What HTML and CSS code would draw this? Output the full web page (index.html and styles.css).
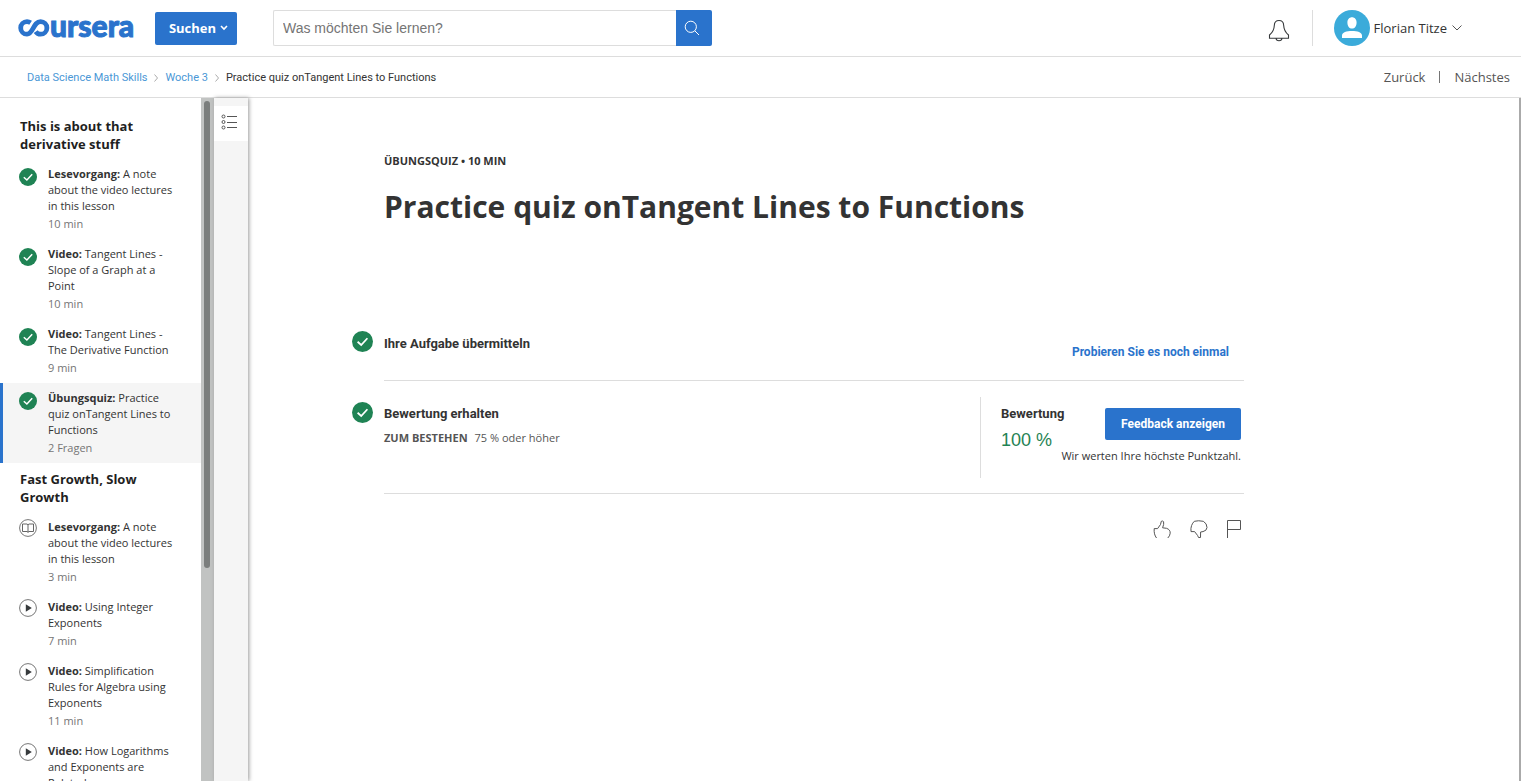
FILE: index.html
```html
<!DOCTYPE html>
<html lang="de">
<head>
<meta charset="utf-8">
<title>Practice quiz onTangent Lines to Functions | Coursera</title>
<link rel="stylesheet" href="styles.css">
</head>
<body>
<svg class="defs" aria-hidden="true">
  <symbol id="check" viewBox="0 0 18 18"><circle cx="9" cy="9" r="9" fill="#1f8354"/><path d="M4.8 9.2 7.9 12 13.2 6.2" fill="none" stroke="#fff" stroke-width="1.5"/></symbol>
  <symbol id="play" viewBox="0 0 18 18"><circle cx="9" cy="9" r="8.4" fill="#fff" stroke="#757575"/><path d="M6.8 5.3v7.4L12.8 9z" fill="#373a3c"/></symbol>
  <symbol id="book" viewBox="0 0 18 18"><circle cx="9" cy="9" r="8.4" fill="#fff" stroke="#757575"/><path d="M3.5 5H8L9 5.8 10 5h4.5v7.5H10L9 13.3 8 12.5H3.5zM9 5.800v7.5" fill="none" stroke="#555" stroke-width=".9"/></symbol>
</svg>
<header class="topbar">
  <a class="logo" href="#" aria-label="coursera">
    <svg class="logo-mark" width="32" height="18" viewBox="0 0 32 18" aria-hidden="true"><path d="M12.600 3.700C11.400 2.900 10.200 2.600 9 2.600a6.200 6.200 0 0 0 0 12.600c6.400 0 6.200-12.600 13.600-12.600a6.300 6.300 0 0 1 0 12.600c-2.400 0-3.900-1.100-4.900-2.600" fill="none" stroke="#2a73cc" stroke-width="4.800"/></svg>
    <span class="logo-text">ursera</span>
  </a>
  <button class="explore" type="button">Suchen
    <svg width="8" height="6" viewBox="0 0 8 6" aria-hidden="true"><path d="M1 1l3 3 3-3" fill="none" stroke="#fff" stroke-width="1.600"/></svg>
  </button>
  <form class="search">
    <input type="text" placeholder="Was möchten Sie lernen?" aria-label="Was möchten Sie lernen?">
    <button type="button" aria-label="Suche">
      <svg width="16" height="16" viewBox="0 0 16 16" fill="none" stroke="#fff" aria-hidden="true"><circle cx="6.800" cy="6.800" r="5.600"/><path d="M10.800 10.800 15 15"/></svg>
    </button>
  </form>
  <div class="account">
    <button class="bell" type="button" aria-label="Mitteilungen">
      <svg width="22" height="24" viewBox="0 0 22 24" fill="none" stroke="#373a3c" stroke-width="1.100" aria-hidden="true"><path d="M11 2.500C7.500 2.500 6.400 4.700 6.300 7.500 6.100 12.500 4.500 14.500 1.500 17v3.200h19V17c-3-2.500-4.600-4.500-4.800-9.500-.1-2.800-1.200-5-4.700-5zM8 20.200c.1 1.500 1.300 2.500 3 2.500s2.900-1 3-2.500"/></svg>
    </button>
    <button class="user" type="button">
      <svg width="36" height="36" viewBox="0 0 36 36" aria-hidden="true"><circle cx="18" cy="18" r="18" fill="#3babda"/><path d="M18 7.200c-2.700 0-4.600 2.100-4.600 5.200 0 3.500 2 6.200 4.600 6.200s4.600-2.700 4.600-6.200c0-3.100-1.900-5.200-4.600-5.200zM8 28v-2.500c0-3.200 4.600-4.500 10-4.500s10 1.300 10 4.500V28z" fill="#fff"/></svg>
      <span>Florian Titze</span>
      <svg width="10" height="6" viewBox="0 0 10 6" aria-hidden="true"><path d="M.5.500 5 5 9.500.500" fill="none" stroke="#555"/></svg>
    </button>
  </div>
</header>
<div class="subbar">
  <nav class="crumbs" aria-label="Pfad">
    <a href="#">Data Science Math Skills</a>
    <svg width="4" height="8" viewBox="0 0 4 8" aria-hidden="true"><path d="M.5.500 3.500 4 .5 7.500" fill="none" stroke="#aaa"/></svg>
    <a href="#">Woche 3</a>
    <svg width="4" height="8" viewBox="0 0 4 8" aria-hidden="true"><path d="M.5.500 3.500 4 .5 7.500" fill="none" stroke="#aaa"/></svg>
    <span>Practice quiz onTangent Lines to Functions</span>
  </nav>
  <nav class="pager" aria-label="Navigation"><a href="#">Zurück</a><i></i><a href="#">Nächstes</a></nav>
</div>
<div class="workspace">
  <aside class="lessons">
    <h2>This is about that derivative stuff</h2>
    <ul>
      <li><a href="#"><svg><use href="#check"/></svg><span><b>Lesevorgang:</b> A note about the video lectures in this lesson<small>10 min</small></span></a></li>
      <li><a href="#"><svg><use href="#check"/></svg><span><b>Video:</b> Tangent Lines - Slope of a Graph at a Point<small>10 min</small></span></a></li>
      <li><a href="#"><svg><use href="#check"/></svg><span><b>Video:</b> Tangent Lines - The Derivative Function<small>9 min</small></span></a></li>
      <li><a class="active" href="#"><svg><use href="#check"/></svg><span><b>Übungsquiz:</b> Practice quiz onTangent Lines to Functions<small>2 Fragen</small></span></a></li>
    </ul>
    <h2>Fast Growth, Slow Growth</h2>
    <ul class="open">
      <li><a href="#"><svg><use href="#book"/></svg><span><b>Lesevorgang:</b> A note about the video lectures in this lesson<small>3 min</small></span></a></li>
      <li><a href="#"><svg><use href="#play"/></svg><span><b>Video:</b> Using Integer Exponents<small>7 min</small></span></a></li>
      <li><a href="#"><svg><use href="#play"/></svg><span><b>Video:</b> Simplification Rules for Algebra using Exponents<small>11 min</small></span></a></li>
      <li><a href="#"><svg><use href="#play"/></svg><span><b>Video:</b> How Logarithms and Exponents are Related</span></a></li>
    </ul>
  </aside>
  <div class="scrolltrack"><div class="scrollthumb"></div></div>
  <div class="rail">
    <button type="button" aria-label="Lektionen">
      <svg width="16" height="16" viewBox="0 0 16 16" fill="none" stroke="#555" aria-hidden="true"><circle cx="2.500" cy="2.500" r="1.500"/><circle cx="2.500" cy="8" r="1.500"/><circle cx="2.500" cy="13.500" r="1.500"/><path d="M6 2.500h10M6 8.500h10M6 13.500h10"/></svg>
    </button>
  </div>
  <main>
    <div class="content">
      <p class="kind">ÜBUNGSQUIZ • 10 MIN</p>
      <h1>Practice quiz onTangent Lines to Functions</h1>
      <section class="step submit">
        <svg class="state"><use href="#check"/></svg>
        <h3>Ihre Aufgabe übermitteln</h3>
        <button class="retry" type="button">Probieren Sie es noch einmal</button>
      </section>
      <section class="step grade">
        <svg class="state"><use href="#check"/></svg>
        <div class="criteria">
          <h3>Bewertung erhalten</h3>
          <p><b>ZUM BESTEHEN</b>75 % oder höher</p>
        </div>
        <div class="result">
          <div class="score"><h3>Bewertung</h3><strong>100 %</strong></div>
          <button class="feedback" type="button">Feedback anzeigen</button>
          <p>Wir werten Ihre höchste Punktzahl.</p>
        </div>
      </section>
      <div class="reactions">
        <button type="button" aria-label="Gefällt mir"><svg width="18" height="18" viewBox="0 0 18 18"><path d="M3.500 18C1.600 15.500.9 12.500 1.200 8.600H4.600L7.500 4.500 8.300 1.300Q9.500.500 10.600 1.700 11.200 4 9.600 7.800L13.500 8.300Q17.400 9.600 17.200 13.200 16.900 16 14.800 18"/></svg></button>
        <button type="button" aria-label="Gefällt mir nicht"><svg width="18" height="18" viewBox="0 0 18 18"><path d="M1 11.600C.4 7 2 3.500 4.300 1.300Q8.500.200 13.300 1.300 17 3.300 17 7.500 16.800 10.800 13 11.600L10.600 12 10.500 17.500H8.500L7.600 15.500 4.600 11.600z"/></svg></button>
        <button type="button" aria-label="Melden"><svg width="14" height="18" viewBox="0 0 14 18"><path d="M.5 18V.500h13v9H.5"/></svg></button>
      </div>
    </div>
  </main>
</div>
</body>
</html>
```
FILE: styles.css
```css
* { box-sizing: border-box; }
body { margin: 0; height: 100vh; display: flex; flex-direction: column; overflow: hidden; background: #fff; color: #333; font-family: "Open Sans", sans-serif; }
a { color: inherit; text-decoration: none; }
button { border: 0; padding: 0; background: none; color: inherit; font-family: inherit; cursor: pointer; }
h1, h2, h3, p, ul { margin: 0; padding: 0; }
ul { list-style: none; }
.defs { position: absolute; width: 0; height: 0; }

.topbar { flex: none; height: 57px; display: flex; align-items: center; padding: 0 59px 0 18px; border-bottom: 1px solid #ddd; }
.logo { display: flex; align-items: center; width: 137px; color: #2a73cc; }
.logo-mark { flex: none; }
.logo-text { font: 900 30px/18px Lato, sans-serif; height: 24px; -webkit-text-stroke: 1px #2a73cc; }
.explore { display: flex; align-items: center; justify-content: center; gap: 4px; width: 82px; height: 33px; padding-left: 5px; border-radius: 2px; background: #2a73cc; color: #fff; font-size: 13px; line-height: 18px; font-weight: 700; }
.search { display: flex; width: 439px; height: 36px; margin-left: 36px; }
.search input { flex: 1; min-width: 0; border: 1px solid #ddd; border-right: 0; border-radius: 2px 0 0 2px; padding: 0 9px; font: 14px "Liberation Sans", sans-serif; color: #333; }
.search input::placeholder { color: #757575; }
.search button { display: flex; align-items: center; justify-content: center; width: 36px; padding-right: 4px; background: #2a73cc; border-radius: 0 2px 2px 0; }
.account { margin-left: auto; display: flex; align-items: center; height: 36px; }
.bell { display: flex; padding: 4px 22px 0 0; }
.user { display: flex; align-items: center; height: 36px; padding-left: 21px; border-left: 1px solid #ddd; font-size: 13px; }
.user span { margin: 0 5px 0 4px; }

.subbar { flex: none; height: 41px; display: flex; align-items: center; justify-content: space-between; padding: 0 11px 0 27px; border-bottom: 1px solid #ddd; }
.crumbs { display: flex; align-items: center; gap: 7px; padding-top: 1px; font: 11px Roboto, sans-serif; }
.crumbs a { color: #4a97d6; }
.pager { display: flex; align-items: center; gap: 14px; font-size: 13px; color: #555; }
.pager i { width: 1px; height: 12px; background: #757575; }

.workspace { flex: 1; min-height: 0; display: flex; }
.lessons { flex: none; width: 201px; padding-top: 19px; overflow: hidden; }
.lessons h2 { margin: 0 50px 6px 20px; font-size: 13px; line-height: 18px; color: #1f1f1f; }
.lessons ul + h2 { margin-top: 7px; }
.lessons li a { display: flex; gap: 11px; padding: 7px 28px 7px 16px; border-left: 3px solid transparent; font-size: 11px; line-height: 16px; }
.lessons li a.active { border-color: #2a73cc; background: #f5f5f5; }
.lessons li svg { flex: none; width: 18px; height: 18px; margin-top: 2px; }
.lessons .open svg { margin-top: 0; }
.lessons small { display: block; font-size: 11px; line-height: 18px; padding-top: 1px; margin-bottom: -1px; color: #757575; }
.scrolltrack { flex: none; width: 13px; padding: 3px; background: #c1c3c2; }
.scrollthumb { width: 6px; height: 69%; border-radius: 3px; background: #7b7e7d; }
.rail { flex: none; width: 34px; padding-top: 8px; background: #f5f5f5; box-shadow: 1px 0 4px #999; }
.rail button { display: flex; justify-content: center; width: 100%; height: 35px; padding: 8px 4px 0 0; background: #fff; }
main { flex: 1; min-width: 0; padding: 55px 24px 0 136px; border-right: 2px solid #aaa; }
.content { max-width: 860px; }
.kind { font-size: 11px; line-height: 16px; font-weight: 700; }
h1 { margin-top: 18px; font-size: 30px; line-height: 40px; }
h3 { font: 700 13px/18px Roboto, sans-serif; }
.step { position: relative; display: flex; justify-content: space-between; border-bottom: 1px solid #ddd; }
.state { position: absolute; left: -32px; width: 21px; height: 21px; }
.submit { align-items: flex-start; margin-top: 104px; padding-bottom: 19px; }
.submit h3 { padding-top: 4px; }
.retry { margin: 12px 15px 0 0; color: #2a73cc; font: 700 12px/18px Roboto, sans-serif; }
.grade { padding: 16px 0 15px; }
.grade .state { top: 21px; }
.criteria { padding-top: 8px; }
.criteria p { margin-top: 7px; font-size: 11px; line-height: 16px; color: #555; }
.criteria b { margin-right: 7px; }
.result { display: grid; grid-template-columns: auto auto; justify-content: space-between; align-content: start; width: 264px; padding: 8px 3px 14px 20px; border-left: 1px solid #ddd; }
.score { height: 43px; }
.score strong { display: block; margin-top: 7px; font: 400 18px/20px "Liberation Sans", sans-serif; color: #1f8354; }
.feedback { width: 136px; height: 32px; margin-top: 3px; border-radius: 2px; background: #2a73cc; color: #fff; font: 700 12px Roboto, sans-serif; }
.result p { grid-column: 1 / -1; text-align: right; font-size: 11px; line-height: 16px; }
.reactions { display: flex; justify-content: flex-end; gap: 19px; padding: 26px 3px 0 0; }
.reactions button { display: flex; }
.reactions svg { fill: none; stroke: #555; }
```
